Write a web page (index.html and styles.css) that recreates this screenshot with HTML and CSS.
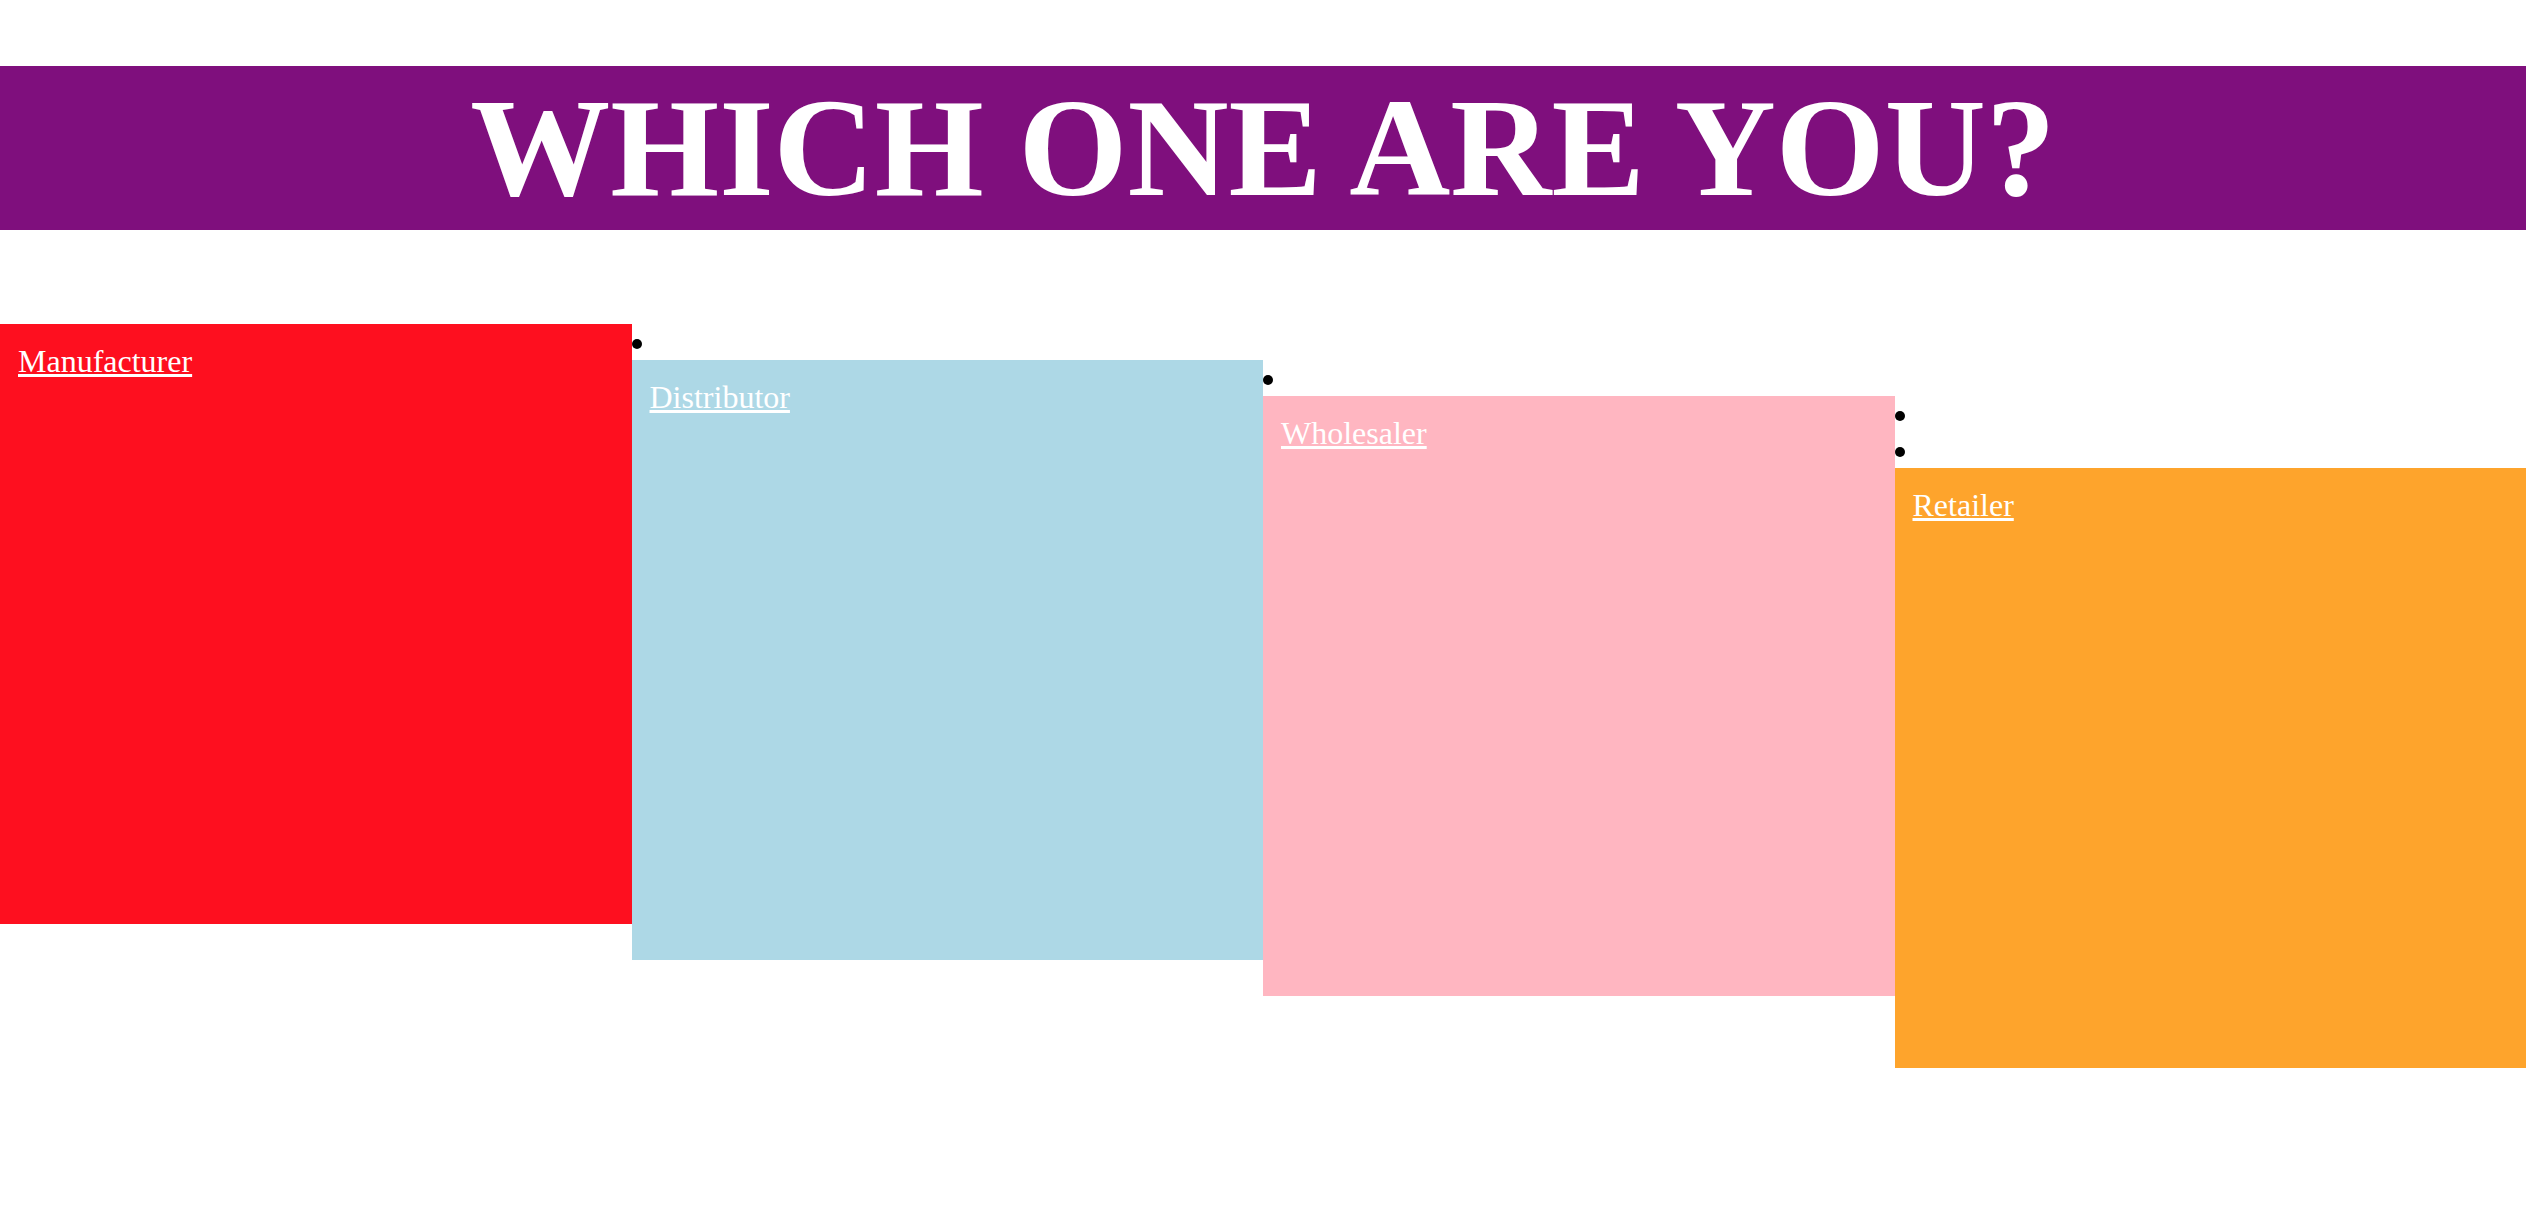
FILE: index.html
```html
<!DOCTYPE html>
<html lang="en">
<head>
<meta charset="utf-8">
<title>Which one are you?</title>
<link rel="stylesheet" href="styles.css">
</head>
<body>
<div class="page">
  <h1 class="title">WHICH ONE ARE YOU?</h1>
  <ul class="roles">
    <li class="role-item"><a class="role role-manufacturer" href="#">Manufacturer</a></li>
    <li class="role-item"><a class="role role-distributor" href="#">Distributor</a></li>
    <li class="role-item"><a class="role role-wholesaler" href="#">Wholesaler</a></li>
    <li class="role-item"><a class="role role-retailer" href="#">Retailer</a></li>
  </ul>
</div>
</body>
</html>
```

FILE: styles.css
```css
html, body {
  margin: 0;
  padding: 0;
  background: #ffffff;
}

.page {
  width: calc(100% - 6px);
  font-family: "Liberation Serif", "Times New Roman", serif;
}

.title {
  margin: 66px 0 0;
  padding: 0;
  background: #7f0f7d;
  color: #ffffff;
  text-align: center;
  font-weight: bold;
  font-size: 140px;
  line-height: 164px;
}

.roles {
  margin: 94px 0 0;
  padding: 0;
  list-style: disc inside;
  font-size: 32px;
  line-height: 36px;
  color: #000000;
}

.role {
  float: left;
  box-sizing: border-box;
  width: 25%;
  height: 600px;
  padding: 19px 18px;
  color: #ffffff;
  text-decoration: underline;
}

.role-manufacturer { background: #fe0f1f; }
.role-distributor { background: #add8e6; }
.role-wholesaler { background: #ffb6c1; }
.role-retailer { background: #fea42c; }
```
